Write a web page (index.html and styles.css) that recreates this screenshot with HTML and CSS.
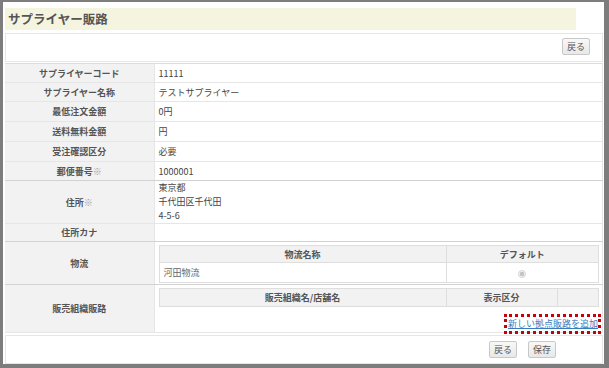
FILE: index.html
```html
<!DOCTYPE html>
<html lang="ja">
<head>
<meta charset="UTF-8">
<title>サプライヤー販路</title>
<link rel="stylesheet" href="styles.css">
</head>
<body>

<div class="window">
  <h1 class="pageTitle">サプライヤー販路</h1>

  <div class="toolbar toolbarTop">
    <button type="button" class="btn">戻る</button>
  </div>

  <table class="detail">
    <colgroup><col class="labelCol"><col></colgroup>
    <tr class="r19"><th>サプライヤーコード</th><td>11111</td></tr>
    <tr class="r19"><th>サプライヤー名称</th><td>テストサプライヤー</td></tr>
    <tr class="r20"><th>最低注文金額</th><td>0円</td></tr>
    <tr class="r20"><th>送料無料金額</th><td>円</td></tr>
    <tr class="r20"><th>受注確認区分</th><td>必要</td></tr>
    <tr class="r19 strong"><th>郵便番号<span class="mark">※</span></th><td>1000001</td></tr>
    <tr class="r42"><th>住所<span class="mark">※</span></th><td class="address">東京都<br>千代田区千代田<br>4-5-6</td></tr>
    <tr class="r18 strong"><th>住所カナ</th><td></td></tr>
    <tr class="r44 strong">
      <th>物流</th>
      <td class="nested">
        <table class="inner">
          <colgroup><col class="nameCol"><col></colgroup>
          <tr class="innerHead"><th>物流名称</th><th>デフォルト</th></tr>
          <tr class="innerRow"><td>河田物流</td><td class="center"><span class="radio"></span></td></tr>
        </table>
      </td>
    </tr>
    <tr class="r48">
      <th>販売組織販路</th>
      <td class="nested top">
        <table class="inner">
          <colgroup><col class="nameCol"><col class="kindCol"><col></colgroup>
          <tr class="innerHead tall"><th>販売組織名/店舗名</th><th>表示区分</th><th></th></tr>
        </table>
        <div class="addRow">
          <span class="highlight"><a href="#" class="addLink">新しい拠点販路を追加</a></span>
        </div>
      </td>
    </tr>
  </table>

  <div class="toolbar toolbarBottom">
    <button type="button" class="btn">戻る</button>
    <button type="button" class="btn">保存</button>
  </div>
</div>

</body>
</html>
```

FILE: styles.css
```css
* {
  box-sizing: border-box;
  margin: 0px;
  padding: 0px;
}

body {
  font-family: "Noto Sans CJK JP", "Noto Sans", sans-serif;
  font-size: 9px;
  color: #444;
  background-color: white;
}

.window {
  width: 609px;
  height: 368px;
  border-style: solid;
  border-color: #7d7d7d;
  border-width: 2px 5px 4px 3px;
  padding: 6px 1px 0px 2px;
  background-color: white;
}

.pageTitle {
  width: 571px;
  height: 22px;
  line-height: 22px;
  padding-left: 3px;
  margin-bottom: 3px;
  font-size: 12.5px;
  font-weight: bold;
  color: #555;
  background-color: #f4f4df;
}

.toolbar {
  display: flex;
  justify-content: flex-end;
  align-items: flex-start;
  border: 1px solid #e6e6e6;
  height: 29px;
}

.toolbarTop {
  padding: 4px 12px 0px 0px;
  margin-bottom: 1px;
}

.toolbarBottom {
  margin-top: 2px;
  padding: 5px 46px 0px 0px;
  gap: 11px;
}

.btn {
  font-family: inherit;
  font-size: 9px;
  color: #555;
  width: 28px;
  height: 17px;
  line-height: 15px;
  background: linear-gradient(#f8f8f8, #e8e8e8);
  border: 1px solid #c8c8c8;
  border-radius: 2px;
}

.detail {
  width: 598px;
  table-layout: fixed;
  border-collapse: collapse;
  border-right: 1px solid #e4e4e4;
}

.labelCol {
  width: 149px;
}

.detail > tbody > tr > th,
.detail > tbody > tr > td {
  border-bottom: 1px solid #e6e6e6;
  padding: 0px 4px;
  vertical-align: middle;
}

.detail > tbody > tr:first-child > th,
.detail > tbody > tr:first-child > td {
  border-top: 1px solid #dcdcdc;
}

.detail > tbody > tr > th {
  background-color: #f2f2f2;
  border-right: 1px solid #e6e6e6;
  color: #555;
  font-weight: bold;
  text-align: center;
}

.detail > tbody > tr.strong > th,
.detail > tbody > tr.strong > td {
  border-bottom-color: #d2d2d2;
}

.detail > tbody > tr > td {
  text-align: left;
}

.mark {
  color: #999;
  font-weight: normal;
}

.r18 { height: 18px; }
.r19 { height: 19px; }
.r20 { height: 20px; }
.r42 { height: 42px; }
.r44 { height: 43px; }
.r48 { height: 48px; }

.address {
  line-height: 14px;
}

.detail > tbody > tr > td.nested {
  padding: 3px 3px 1px 4px;
}

.detail > tbody > tr > td.top {
  vertical-align: top;
  padding-bottom: 0px;
}

.inner {
  width: 100%;
  table-layout: fixed;
  border-collapse: collapse;
}

.nameCol {
  width: 287px;
}

.kindCol {
  width: 111px;
}

.inner th,
.inner td {
  border: 1px solid #dedede;
  padding: 0px 4px;
}

.innerHead {
  height: 17px;
}

.innerHead.tall {
  height: 18px;
}

.innerHead th {
  background-color: #f2f2f2;
  color: #555;
  font-weight: bold;
  text-align: center;
}

.innerRow {
  height: 20px;
}

.innerRow td {
  color: #666;
}

.center {
  text-align: center;
}

.radio {
  display: inline-block;
  width: 8px;
  height: 8px;
  border-radius: 50%;
  border: 1px solid #d6d6d6;
  background: radial-gradient(circle, #c4c4c4 0 2px, #f2f2f2 2.5px);
  vertical-align: middle;
}

.addRow {
  display: flex;
  justify-content: flex-end;
  margin-top: 7px;
  margin-right: -2px;
  margin-bottom: -8px;
}

.highlight {
  display: inline-block;
  width: 97px;
  height: 20px;
  border: 3px dotted #c8000a;
  text-align: right;
  line-height: 13px;
  white-space: nowrap;
  position: relative;
  z-index: 1;
}

.addLink {
  color: #3a7cc0;
  text-decoration: underline;
  font-size: 9px;
}
```
